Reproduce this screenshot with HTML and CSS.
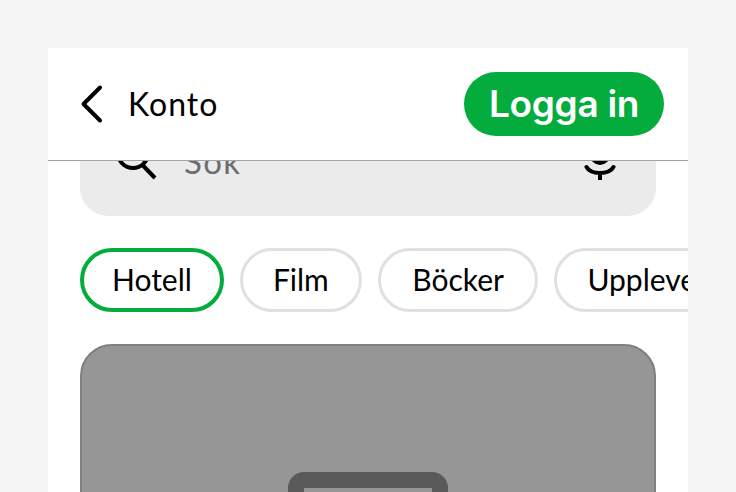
FILE: index.html
```html
<!DOCTYPE html>
<html lang="sv">
<head>
<meta charset="utf-8">
<title>Konto</title>
<link rel="stylesheet" href="styles.css">
</head>
<body>
<main class="panel">
  <header class="topbar">
    <div class="title-group">
      <svg class="back" width="24" height="40" viewBox="0 0 24 40" fill="none"><path d="M20 3.500 L3.500 20 L20 36.500" stroke="#000" stroke-width="4" stroke-linecap="round" stroke-linejoin="round"/></svg>
      <span class="title">Konto</span>
    </div>
    <button class="login">Logga in</button>
  </header>
  <div class="scroller">
    <div class="scroll-content">
      <div class="search">
        <svg class="search-icon" width="44" height="44" viewBox="0 0 44 44" fill="none"><circle cx="16" cy="17" r="15" stroke="#000" stroke-width="4"/><path d="M25.500 29 L38 42" stroke="#000" stroke-width="4"/></svg>
        <span class="search-text">Sök</span>
        <svg class="mic" width="32" height="40" viewBox="0 0 32 40" fill="none"><rect x="8" y="-5" width="16" height="24" rx="8" stroke="#000" stroke-width="4"/><path d="M2.500 23 C7 31 25 31 29.500 23" stroke="#000" stroke-width="4" stroke-linecap="round"/><path d="M16 28 V36" stroke="#000" stroke-width="4"/></svg>
      </div>
      <nav class="chips">
        <span class="chip active">Hotell</span>
        <span class="chip">Film</span>
        <span class="chip chip-wide">Böcker</span>
        <span class="chip">Upplevelser</span>
      </nav>
      <section class="card">
        <div class="placeholder"><div class="placeholder-inner"></div></div>
      </section>
    </div>
  </div>
</main>
</body>
</html>
```

FILE: styles.css
```css
* { box-sizing: border-box; }
html, body { margin: 0; height: 100%; overflow: hidden; }
body {
  background: #f5f5f5;
  padding: 48px 48px 0;
  font-family: Lato, "Open Sans", sans-serif;
  color: #000;
}
.panel {
  width: 640px;
  height: 444px;
  background: #fff;
  overflow: hidden;
  display: flex;
  flex-direction: column;
}
.topbar {
  flex: none;
  height: 113px;
  padding: 0 24px 0 32px;
  display: flex;
  align-items: center;
  justify-content: space-between;
  border-bottom: 1px solid #a3a3a3;
  background: #fff;
}
.title-group { display: flex; align-items: center; gap: 24px; margin-top: -1px; }
.back { display: block; }
.title { font-size: 32px; letter-spacing: 1px; font-weight: 400; }
.login {
  width: 200px;
  height: 64px;
  margin-top: -1px;
  border: 0;
  border-radius: 32px;
  background: #03ac3d;
  color: #fff;
  font: 600 37px Inter, Roboto, sans-serif;
  letter-spacing: -0.3px;
  padding: 0;
}
.scroller { flex: 1; overflow: hidden; }
.scroll-content { padding: 0 32px; margin-top: -25px; }
.search {
  height: 80px;
  width: 576px;
  background: #ebebeb;
  border-radius: 0 0 28px 28px;
  display: flex;
  align-items: flex-start;
  padding: 0 40px 0 37px;
}
.search-icon { flex: none; overflow: visible; }
.search-text { font-size: 33px; color: #6d6d6d; margin-left: 23px; flex: 1; margin-top: 5px; letter-spacing: 1.4px; }
.mic { flex: none; margin-top: 8px; }
.chips { display: flex; gap: 16px; margin-top: 32px; white-space: nowrap; }
.chip {
  flex: none;
  height: 64px;
  padding: 0 30px 2px;
  display: flex;
  align-items: center;
  border: 3px solid #e0e0e0;
  border-radius: 32px;
  font-size: 30px;
  font-weight: 400;
}
.chip-wide { padding: 0 31.5px 2px; }
.chip.active { border: 4px solid #03ac3d; padding: 0 28px 2px; }
.card {
  margin-top: 32px;
  width: 576px;
  height: 300px;
  background: #969696;
  border: 2px solid #7f7f7f;
  border-radius: 32px;
  padding-top: 126px;
  display: flex;
  justify-content: center;
  align-items: flex-start;
}
.placeholder {
  width: 160px;
  height: 120px;
  background: #595959;
  border-radius: 16px;
  padding: 16px;
}
.placeholder-inner { width: 128px; height: 80px; background: #969696; }
```
